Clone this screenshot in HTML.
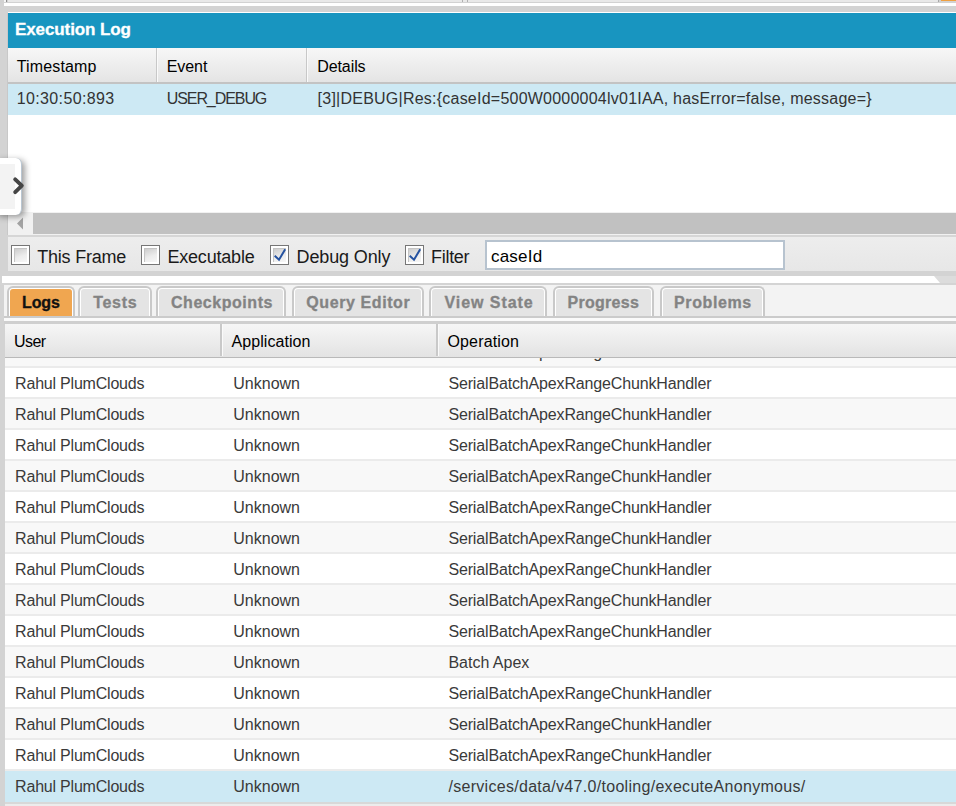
<!DOCTYPE html>
<html><head><meta charset="utf-8"><style>
html,body{margin:0;padding:0;}
body{width:956px;height:806px;position:relative;overflow:hidden;font-family:"Liberation Sans", sans-serif;}
.r{position:absolute;}
.t{position:absolute;line-height:0;white-space:nowrap;}
</style></head><body>
<div class="r" style="left:0px;top:0px;width:956px;height:806px;background:#d3d3d3"></div>
<div class="r" style="left:0px;top:0px;width:956px;height:3px;background:#d2d2d2"></div>
<div class="r" style="left:8px;top:0px;width:931px;height:2px;background:#e9e9e9;border-radius:0 0 3px 0"></div>
<div class="r" style="left:6px;top:0px;width:1px;height:2px;background:#8c8c8c"></div>
<div class="r" style="left:4px;top:0px;width:2px;height:2px;background:#f6f6f6"></div>
<div class="r" style="left:462px;top:0px;width:1px;height:2px;background:#b0b0b0"></div>
<div class="r" style="left:467px;top:0px;width:1px;height:2px;background:#b0b0b0"></div>
<div class="r" style="left:938px;top:0px;width:1px;height:2px;background:#a8a8a8"></div>
<div class="r" style="left:4px;top:3px;width:952px;height:3px;background:#fff"></div>
<div class="r" style="left:941px;top:0px;width:15px;height:1px;background:#f0a040"></div>
<div class="r" style="left:8px;top:12px;width:948px;height:1px;background:#fff"></div>
<div class="r" style="left:7px;top:13px;width:1px;height:222px;background:#c8c8c8"></div>
<div class="r" style="left:8px;top:13px;width:948px;height:35px;background:#1895c0"></div>
<div class="t" style="left:15px;top:29.81px;font-size:17px;letter-spacing:-0.1px;color:#fff;font-weight:bold;-webkit-text-stroke:0.3px #fff;">Execution Log</div>
<div class="r" style="left:8px;top:48px;width:948px;height:34px;background:linear-gradient(#f7f7f7,#e4e4e4)"></div>
<div class="r" style="left:8px;top:82px;width:948px;height:2px;background:#c3c3c3"></div>
<div class="r" style="left:156px;top:48px;width:1px;height:34px;background:#c8c8c8"></div>
<div class="r" style="left:157px;top:48px;width:1px;height:34px;background:#fafafa"></div>
<div class="r" style="left:306px;top:48px;width:1px;height:34px;background:#c8c8c8"></div>
<div class="r" style="left:307px;top:48px;width:1px;height:34px;background:#fafafa"></div>
<div class="t" style="left:16.7px;top:67.46px;font-size:16px;letter-spacing:0.16px;color:#000;">Timestamp</div>
<div class="t" style="left:166.7px;top:67.46px;font-size:16px;letter-spacing:-0.05px;color:#000;">Event</div>
<div class="t" style="left:317.2px;top:67.46px;font-size:16px;letter-spacing:-0.08px;color:#000;">Details</div>
<div class="r" style="left:8px;top:84px;width:948px;height:31px;background:#cde9f4"></div>
<div class="t" style="left:16.7px;top:99.06px;font-size:16px;letter-spacing:0.37px;color:#333;">10:30:50:893</div>
<div class="t" style="left:166.7px;top:99.06px;font-size:16px;letter-spacing:-1.07px;color:#333;">USER_DEBUG</div>
<div class="t" style="left:317.6px;top:99.06px;font-size:16px;letter-spacing:0.23px;color:#333;">[3]|DEBUG|Res:{caseId=500W0000004lv01IAA, hasError=false, message=}</div>
<div class="r" style="left:8px;top:115px;width:948px;height:97px;background:#fff"></div>
<div class="r" style="left:8px;top:212px;width:948px;height:23px;background:#f1f1f1"></div>
<div class="r" style="left:33px;top:213px;width:923px;height:21px;background:#c1c1c1"></div>
<svg class="r" style="left:16px;top:217px" width="8" height="13"><path d="M7 0.5 L1 6.5 L7 12.5 Z" fill="#a3a3a3"/></svg>
<div class="r" style="left:8px;top:235px;width:948px;height:2px;background:#d6d6d6"></div>
<div class="r" style="left:8px;top:237px;width:948px;height:34px;background:linear-gradient(#ededed,#e7e7e7)"></div>
<div class="r" style="left:11px;top:245px;width:19px;height:20px;box-sizing:border-box;border:1.4px solid #767676;background:#fff"></div>
<div class="r" style="left:14px;top:248px;width:13px;height:14px;box-sizing:border-box;border-left:1px solid #c4c4c4;border-top:1px solid #c4c4c4;background:linear-gradient(160deg,#cdcdcd,#ececec 55%,#f6f6f6)"></div>
<div class="r" style="left:141px;top:245px;width:19px;height:20px;box-sizing:border-box;border:1.4px solid #767676;background:#fff"></div>
<div class="r" style="left:144px;top:248px;width:13px;height:14px;box-sizing:border-box;border-left:1px solid #c4c4c4;border-top:1px solid #c4c4c4;background:linear-gradient(160deg,#cdcdcd,#ececec 55%,#f6f6f6)"></div>
<div class="r" style="left:270px;top:245px;width:19px;height:20px;box-sizing:border-box;border:1.4px solid #767676;background:#fff"></div>
<div class="r" style="left:273px;top:248px;width:13px;height:14px;box-sizing:border-box;border-left:1px solid #c4c4c4;border-top:1px solid #c4c4c4;background:linear-gradient(160deg,#cdcdcd,#ececec 55%,#f6f6f6)"></div>
<svg class="r" style="left:270px;top:245px" width="20" height="20"><path d="M4.7 10.8 L9 14.7 L15.2 4.3" stroke="#2552a0" stroke-width="2" fill="none"/></svg>
<div class="r" style="left:405px;top:245px;width:19px;height:20px;box-sizing:border-box;border:1.4px solid #767676;background:#fff"></div>
<div class="r" style="left:408px;top:248px;width:13px;height:14px;box-sizing:border-box;border-left:1px solid #c4c4c4;border-top:1px solid #c4c4c4;background:linear-gradient(160deg,#cdcdcd,#ececec 55%,#f6f6f6)"></div>
<svg class="r" style="left:405px;top:245px" width="20" height="20"><path d="M4.7 10.8 L9 14.7 L15.2 4.3" stroke="#2552a0" stroke-width="2" fill="none"/></svg>
<div class="t" style="left:37.2px;top:257.46px;font-size:18px;letter-spacing:-0.21px;color:#1a1a1a;">This Frame</div>
<div class="t" style="left:167.4px;top:257.46px;font-size:18px;letter-spacing:-0.19px;color:#1a1a1a;">Executable</div>
<div class="t" style="left:296.6px;top:257.46px;font-size:18px;letter-spacing:-0.14px;color:#1a1a1a;">Debug Only</div>
<div class="t" style="left:431px;top:257.46px;font-size:18px;letter-spacing:-0.28px;color:#1a1a1a;">Filter</div>
<div class="r" style="left:485px;top:240px;width:300px;height:30px;box-sizing:border-box;border:2px solid #b7c3cf;background:#fff"></div>
<div class="t" style="left:491px;top:256.51px;font-size:17px;letter-spacing:0.2px;color:#000;">caseId</div>
<div class="r" style="left:900px;top:276px;width:56px;height:7px;background:#dcdcdc"></div>
<svg class="r" style="left:2px;top:276px" width="940" height="7"><path d="M0 0 L932 0 L938 7 L0 7 Z" fill="#fff"/></svg>
<div class="r" style="left:0px;top:283px;width:956px;height:2px;background:#d4d4d4"></div>
<div class="r" style="left:4px;top:285px;width:952px;height:31px;background:#f3f3f3"></div>
<div class="r" style="left:7px;top:286px;width:68px;height:32px;box-sizing:border-box;border:2px solid #c9c9c9;border-bottom:none;border-radius:6px 6px 0 0;background:#fff"></div>
<div class="r" style="left:10px;top:289px;width:62px;height:28px;border-radius:3px 3px 0 0;background:#f0a650"></div>
<div class="t" style="left:22px;top:302.66px;font-size:16px;letter-spacing:-0.13px;color:#111;font-weight:bold;-webkit-text-stroke:0.3px #111;">Logs</div>
<div class="r" style="left:78px;top:286px;width:74px;height:32px;box-sizing:border-box;border:2px solid #c9c9c9;border-bottom:none;border-radius:6px 6px 0 0;background:#fff"></div>
<div class="r" style="left:81px;top:289px;width:68px;height:28px;border-radius:3px 3px 0 0;background:#e4e4e4"></div>
<div class="t" style="left:93.2px;top:302.66px;font-size:16px;letter-spacing:0.72px;color:#838383;font-weight:bold;-webkit-text-stroke:0.3px #838383;">Tests</div>
<div class="r" style="left:156px;top:286px;width:130px;height:32px;box-sizing:border-box;border:2px solid #c9c9c9;border-bottom:none;border-radius:6px 6px 0 0;background:#fff"></div>
<div class="r" style="left:159px;top:289px;width:124px;height:28px;border-radius:3px 3px 0 0;background:#e4e4e4"></div>
<div class="t" style="left:171px;top:302.66px;font-size:16px;letter-spacing:0.54px;color:#838383;font-weight:bold;-webkit-text-stroke:0.3px #838383;">Checkpoints</div>
<div class="r" style="left:292px;top:286px;width:132px;height:32px;box-sizing:border-box;border:2px solid #c9c9c9;border-bottom:none;border-radius:6px 6px 0 0;background:#fff"></div>
<div class="r" style="left:295px;top:289px;width:126px;height:28px;border-radius:3px 3px 0 0;background:#e4e4e4"></div>
<div class="t" style="left:306.3px;top:302.66px;font-size:16px;letter-spacing:0.59px;color:#838383;font-weight:bold;-webkit-text-stroke:0.3px #838383;">Query Editor</div>
<div class="r" style="left:429px;top:286px;width:118px;height:32px;box-sizing:border-box;border:2px solid #c9c9c9;border-bottom:none;border-radius:6px 6px 0 0;background:#fff"></div>
<div class="r" style="left:432px;top:289px;width:112px;height:28px;border-radius:3px 3px 0 0;background:#e4e4e4"></div>
<div class="t" style="left:444.5px;top:302.66px;font-size:16px;letter-spacing:0.94px;color:#838383;font-weight:bold;-webkit-text-stroke:0.3px #838383;">View State</div>
<div class="r" style="left:553px;top:286px;width:101px;height:32px;box-sizing:border-box;border:2px solid #c9c9c9;border-bottom:none;border-radius:6px 6px 0 0;background:#fff"></div>
<div class="r" style="left:556px;top:289px;width:95px;height:28px;border-radius:3px 3px 0 0;background:#e4e4e4"></div>
<div class="t" style="left:567.6px;top:302.66px;font-size:16px;letter-spacing:0.27px;color:#838383;font-weight:bold;-webkit-text-stroke:0.3px #838383;">Progress</div>
<div class="r" style="left:660px;top:286px;width:105px;height:32px;box-sizing:border-box;border:2px solid #c9c9c9;border-bottom:none;border-radius:6px 6px 0 0;background:#fff"></div>
<div class="r" style="left:663px;top:289px;width:99px;height:28px;border-radius:3px 3px 0 0;background:#e4e4e4"></div>
<div class="t" style="left:674.1px;top:302.66px;font-size:16px;letter-spacing:0.6px;color:#838383;font-weight:bold;-webkit-text-stroke:0.3px #838383;">Problems</div>
<div class="r" style="left:4px;top:316px;width:952px;height:2px;background:#cbcbcb"></div>
<div class="r" style="left:4px;top:318px;width:952px;height:3px;background:#fafafa"></div>
<div class="r" style="left:4px;top:321px;width:952px;height:3px;background:#cfcfcf"></div>
<div class="r" style="left:5px;top:324px;width:951px;height:33px;background:linear-gradient(#f6f6f6,#e3e3e3)"></div>
<div class="r" style="left:220px;top:324px;width:2px;height:32px;background:#c9c9c9"></div>
<div class="r" style="left:222px;top:324px;width:1px;height:32px;background:#fafafa"></div>
<div class="r" style="left:436px;top:324px;width:2px;height:32px;background:#c9c9c9"></div>
<div class="r" style="left:438px;top:324px;width:1px;height:32px;background:#fafafa"></div>
<div class="r" style="left:5px;top:357px;width:951px;height:1px;background:#b9b9b9"></div>
<div class="t" style="left:14.1px;top:341.56px;font-size:16px;letter-spacing:-0.6px;color:#000;">User</div>
<div class="t" style="left:231.6px;top:341.56px;font-size:16px;letter-spacing:0.06px;color:#000;">Application</div>
<div class="t" style="left:447.5px;top:341.56px;font-size:16px;letter-spacing:0.14px;color:#000;">Operation</div>
<div class="r" style="left:5px;top:358px;width:951px;height:444px;overflow:hidden;background:#fff">
<div class="r" style="left:0px;top:-23px;width:951px;height:2px;background:#ebebeb"></div>
<div class="r" style="left:0px;top:-21px;width:951px;height:29px;background:#f8f8f8"></div>
<div class="t" style="left:443.4px;top:-4.84px;font-size:16px;letter-spacing:-0.15px;color:#3a3a3a;">SerialBatchApexRangeChunkHandler</div>
<div class="r" style="left:0px;top:8px;width:951px;height:2px;background:#ebebeb"></div>
<div class="r" style="left:0px;top:10px;width:951px;height:29px;background:#ffffff"></div>
<div class="t" style="left:10.1px;top:26.16px;font-size:16px;letter-spacing:-0.21px;color:#3a3a3a;">Rahul PlumClouds</div>
<div class="t" style="left:228.3px;top:26.16px;font-size:16px;letter-spacing:0px;color:#3a3a3a;">Unknown</div>
<div class="t" style="left:443.4px;top:26.16px;font-size:16px;letter-spacing:-0.15px;color:#3a3a3a;">SerialBatchApexRangeChunkHandler</div>
<div class="r" style="left:0px;top:39px;width:951px;height:2px;background:#ebebeb"></div>
<div class="r" style="left:0px;top:41px;width:951px;height:29px;background:#f8f8f8"></div>
<div class="t" style="left:10.1px;top:57.16px;font-size:16px;letter-spacing:-0.21px;color:#3a3a3a;">Rahul PlumClouds</div>
<div class="t" style="left:228.3px;top:57.16px;font-size:16px;letter-spacing:0px;color:#3a3a3a;">Unknown</div>
<div class="t" style="left:443.4px;top:57.16px;font-size:16px;letter-spacing:-0.15px;color:#3a3a3a;">SerialBatchApexRangeChunkHandler</div>
<div class="r" style="left:0px;top:70px;width:951px;height:2px;background:#ebebeb"></div>
<div class="r" style="left:0px;top:72px;width:951px;height:29px;background:#ffffff"></div>
<div class="t" style="left:10.1px;top:88.16px;font-size:16px;letter-spacing:-0.21px;color:#3a3a3a;">Rahul PlumClouds</div>
<div class="t" style="left:228.3px;top:88.16px;font-size:16px;letter-spacing:0px;color:#3a3a3a;">Unknown</div>
<div class="t" style="left:443.4px;top:88.16px;font-size:16px;letter-spacing:-0.15px;color:#3a3a3a;">SerialBatchApexRangeChunkHandler</div>
<div class="r" style="left:0px;top:101px;width:951px;height:2px;background:#ebebeb"></div>
<div class="r" style="left:0px;top:103px;width:951px;height:29px;background:#f8f8f8"></div>
<div class="t" style="left:10.1px;top:119.16px;font-size:16px;letter-spacing:-0.21px;color:#3a3a3a;">Rahul PlumClouds</div>
<div class="t" style="left:228.3px;top:119.16px;font-size:16px;letter-spacing:0px;color:#3a3a3a;">Unknown</div>
<div class="t" style="left:443.4px;top:119.16px;font-size:16px;letter-spacing:-0.15px;color:#3a3a3a;">SerialBatchApexRangeChunkHandler</div>
<div class="r" style="left:0px;top:132px;width:951px;height:2px;background:#ebebeb"></div>
<div class="r" style="left:0px;top:134px;width:951px;height:29px;background:#ffffff"></div>
<div class="t" style="left:10.1px;top:150.16px;font-size:16px;letter-spacing:-0.21px;color:#3a3a3a;">Rahul PlumClouds</div>
<div class="t" style="left:228.3px;top:150.16px;font-size:16px;letter-spacing:0px;color:#3a3a3a;">Unknown</div>
<div class="t" style="left:443.4px;top:150.16px;font-size:16px;letter-spacing:-0.15px;color:#3a3a3a;">SerialBatchApexRangeChunkHandler</div>
<div class="r" style="left:0px;top:163px;width:951px;height:2px;background:#ebebeb"></div>
<div class="r" style="left:0px;top:165px;width:951px;height:29px;background:#f8f8f8"></div>
<div class="t" style="left:10.1px;top:181.16px;font-size:16px;letter-spacing:-0.21px;color:#3a3a3a;">Rahul PlumClouds</div>
<div class="t" style="left:228.3px;top:181.16px;font-size:16px;letter-spacing:0px;color:#3a3a3a;">Unknown</div>
<div class="t" style="left:443.4px;top:181.16px;font-size:16px;letter-spacing:-0.15px;color:#3a3a3a;">SerialBatchApexRangeChunkHandler</div>
<div class="r" style="left:0px;top:194px;width:951px;height:2px;background:#ebebeb"></div>
<div class="r" style="left:0px;top:196px;width:951px;height:29px;background:#ffffff"></div>
<div class="t" style="left:10.1px;top:212.16px;font-size:16px;letter-spacing:-0.21px;color:#3a3a3a;">Rahul PlumClouds</div>
<div class="t" style="left:228.3px;top:212.16px;font-size:16px;letter-spacing:0px;color:#3a3a3a;">Unknown</div>
<div class="t" style="left:443.4px;top:212.16px;font-size:16px;letter-spacing:-0.15px;color:#3a3a3a;">SerialBatchApexRangeChunkHandler</div>
<div class="r" style="left:0px;top:225px;width:951px;height:2px;background:#ebebeb"></div>
<div class="r" style="left:0px;top:227px;width:951px;height:29px;background:#f8f8f8"></div>
<div class="t" style="left:10.1px;top:243.16px;font-size:16px;letter-spacing:-0.21px;color:#3a3a3a;">Rahul PlumClouds</div>
<div class="t" style="left:228.3px;top:243.16px;font-size:16px;letter-spacing:0px;color:#3a3a3a;">Unknown</div>
<div class="t" style="left:443.4px;top:243.16px;font-size:16px;letter-spacing:-0.15px;color:#3a3a3a;">SerialBatchApexRangeChunkHandler</div>
<div class="r" style="left:0px;top:256px;width:951px;height:2px;background:#ebebeb"></div>
<div class="r" style="left:0px;top:258px;width:951px;height:29px;background:#ffffff"></div>
<div class="t" style="left:10.1px;top:274.16px;font-size:16px;letter-spacing:-0.21px;color:#3a3a3a;">Rahul PlumClouds</div>
<div class="t" style="left:228.3px;top:274.16px;font-size:16px;letter-spacing:0px;color:#3a3a3a;">Unknown</div>
<div class="t" style="left:443.4px;top:274.16px;font-size:16px;letter-spacing:-0.15px;color:#3a3a3a;">SerialBatchApexRangeChunkHandler</div>
<div class="r" style="left:0px;top:287px;width:951px;height:2px;background:#ebebeb"></div>
<div class="r" style="left:0px;top:289px;width:951px;height:29px;background:#f8f8f8"></div>
<div class="t" style="left:10.1px;top:305.16px;font-size:16px;letter-spacing:-0.21px;color:#3a3a3a;">Rahul PlumClouds</div>
<div class="t" style="left:228.3px;top:305.16px;font-size:16px;letter-spacing:0px;color:#3a3a3a;">Unknown</div>
<div class="t" style="left:443.4px;top:305.16px;font-size:16px;letter-spacing:0.0px;color:#3a3a3a;">Batch Apex</div>
<div class="r" style="left:0px;top:318px;width:951px;height:2px;background:#ebebeb"></div>
<div class="r" style="left:0px;top:320px;width:951px;height:29px;background:#ffffff"></div>
<div class="t" style="left:10.1px;top:336.16px;font-size:16px;letter-spacing:-0.21px;color:#3a3a3a;">Rahul PlumClouds</div>
<div class="t" style="left:228.3px;top:336.16px;font-size:16px;letter-spacing:0px;color:#3a3a3a;">Unknown</div>
<div class="t" style="left:443.4px;top:336.16px;font-size:16px;letter-spacing:-0.15px;color:#3a3a3a;">SerialBatchApexRangeChunkHandler</div>
<div class="r" style="left:0px;top:349px;width:951px;height:2px;background:#ebebeb"></div>
<div class="r" style="left:0px;top:351px;width:951px;height:29px;background:#f8f8f8"></div>
<div class="t" style="left:10.1px;top:367.16px;font-size:16px;letter-spacing:-0.21px;color:#3a3a3a;">Rahul PlumClouds</div>
<div class="t" style="left:228.3px;top:367.16px;font-size:16px;letter-spacing:0px;color:#3a3a3a;">Unknown</div>
<div class="t" style="left:443.4px;top:367.16px;font-size:16px;letter-spacing:-0.15px;color:#3a3a3a;">SerialBatchApexRangeChunkHandler</div>
<div class="r" style="left:0px;top:380px;width:951px;height:2px;background:#ebebeb"></div>
<div class="r" style="left:0px;top:382px;width:951px;height:29px;background:#ffffff"></div>
<div class="t" style="left:10.1px;top:398.16px;font-size:16px;letter-spacing:-0.21px;color:#3a3a3a;">Rahul PlumClouds</div>
<div class="t" style="left:228.3px;top:398.16px;font-size:16px;letter-spacing:0px;color:#3a3a3a;">Unknown</div>
<div class="t" style="left:443.4px;top:398.16px;font-size:16px;letter-spacing:-0.15px;color:#3a3a3a;">SerialBatchApexRangeChunkHandler</div>
<div class="r" style="left:0px;top:411px;width:951px;height:2px;background:#ebebeb"></div>
<div class="r" style="left:0px;top:413px;width:951px;height:31px;background:#cde9f4"></div>
<div class="t" style="left:10.1px;top:429.16px;font-size:16px;letter-spacing:-0.21px;color:#3a3a3a;">Rahul PlumClouds</div>
<div class="t" style="left:228.3px;top:429.16px;font-size:16px;letter-spacing:0px;color:#3a3a3a;">Unknown</div>
<div class="t" style="left:443.4px;top:429.16px;font-size:16px;letter-spacing:0.3px;color:#3a3a3a;">/services/data/v47.0/tooling/executeAnonymous/</div>
</div>
<div class="r" style="left:5px;top:802px;width:951px;height:2px;background:#d8d8d8"></div>
<div class="r" style="left:5px;top:804px;width:951px;height:2px;background:#ececec"></div>
<div class="r" style="left:-6px;top:158px;width:27px;height:57px;background:#fff;border-radius:6px;border-right:1px solid #b9c6d2;box-shadow:3px 2px 6px rgba(0,0,0,0.38)"></div>
<div class="r" style="left:0px;top:164px;width:15px;height:45px;background:#f3f3f3"></div>
<svg class="r" style="left:0px;top:170px" width="30" height="32"><path d="M15.2 9.3 L21.8 15.7 L15.2 22.1" stroke="#454545" stroke-width="3.9" stroke-linecap="round" stroke-linejoin="round" fill="none"/></svg>
</body></html>
